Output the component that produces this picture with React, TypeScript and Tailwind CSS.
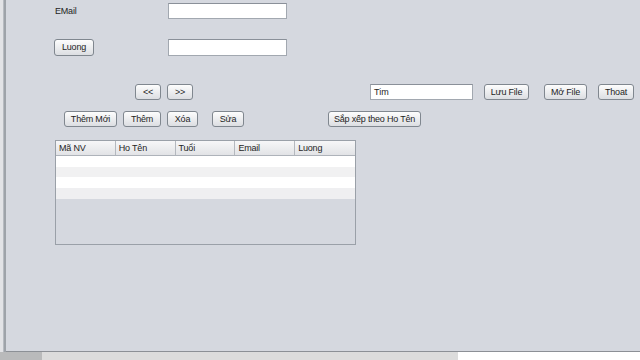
import React from "react";

function Btn({ children, className = "" }: { children: React.ReactNode; className?: string }) {
  return (
    <div
      className={
        "h-[16px] shrink-0 flex items-center justify-center rounded-[3px] border border-[#80878f] bg-gradient-to-b from-[#fdfdfd] to-[#dcdee2] text-[9px] leading-none text-[#1e1e1e] tracking-[-0.2px] " +
        className
      }
    >
      {children}
    </div>
  );
}

function Field({ children, className = "" }: { children?: React.ReactNode; className?: string }) {
  return (
    <div
      className={
        "h-[16px] shrink-0 flex items-center bg-white border border-[#a2a8b0] border-t-[#8a9099] pl-[3px] text-[9px] leading-none text-[#1e1e1e] " +
        className
      }
    >
      {children}
    </div>
  );
}

export default function App() {
  const cols = ["Mã NV", "Ho Tên", "Tuổi", "Email", "Luong"];
  return (
    <div className="w-[640px] h-[360px] overflow-hidden flex flex-col bg-[#d5d8df] font-['Liberation_Sans',Arial,sans-serif]">
      <div className="h-[352px] flex flex-row">
        <div className="w-[6px] shrink-0 flex flex-row">
          <div className="w-[3px] bg-[#e2e3e6]" />
          <div className="w-[1px] bg-[#b7bbc1]" />
          <div className="w-[2px] bg-[#9ea3a9]" />
        </div>
        <div className="flex-1 flex flex-col border-b border-[#8c9096]">
          {/* Row 1 */}
          <div className="mt-[3px] h-[16px] flex flex-row items-center">
            <div className="ml-[49px] w-[113px] text-[9px] leading-none text-[#1e1e1e] tracking-[-0.2px]">EMail</div>
            <Field className="w-[119px]" />
          </div>
          {/* Row 2 */}
          <div className="mt-[20px] h-[17px] flex flex-row items-center">
            <Btn className="ml-[48px] w-[40px] h-[17px]">Luong</Btn>
            <Field className="ml-[74px] w-[119px] h-[17px]" />
          </div>
          {/* Row 3 */}
          <div className="mt-[28px] h-[16px] flex flex-row items-center">
            <Btn className="ml-[129px] w-[26px]">&lt;&lt;</Btn>
            <Btn className="ml-[6px] w-[26px]">&gt;&gt;</Btn>
            <Field className="ml-[177px] w-[103px]">Tim</Field>
            <Btn className="ml-[11px] w-[45px]">Lưu File</Btn>
            <Btn className="ml-[15px] w-[43px]">Mở File</Btn>
            <Btn className="ml-[11px] w-[36px]">Thoat</Btn>
          </div>
          {/* Row 4 */}
          <div className="mt-[11px] h-[16px] flex flex-row items-center">
            <Btn className="ml-[58px] w-[53px]">Thêm Mới</Btn>
            <Btn className="ml-[6px] w-[38px]">Thêm</Btn>
            <Btn className="ml-[6px] w-[31px]">Xóa</Btn>
            <Btn className="ml-[14px] w-[32px]">Sửa</Btn>
            <Btn className="ml-[84px] w-[93px]">Sắp xếp theo Ho Tên</Btn>
          </div>
          {/* Table */}
          <div className="mt-[13px] ml-[49px] w-[301px] h-[105px] border border-[#9aa0a8] flex flex-col">
            <div className="h-[15px] flex flex-row bg-gradient-to-b from-[#f7f7f8] to-[#e2e3e6] border-b border-[#aeb3ba]">
              {cols.map((c, i) => (
                <div
                  key={c}
                  className={
                    "w-[60px] flex items-center pl-[3px] text-[9px] leading-none text-[#1e1e1e] tracking-[-0.2px] " +
                    (i < 4 ? "border-r border-[#b4b8be]" : "")
                  }
                >
                  {c}
                </div>
              ))}
            </div>
            <div className="h-[11px] bg-white" />
            <div className="h-[10px] bg-[#f1f1f2]" />
            <div className="h-[11px] bg-white" />
            <div className="h-[11px] bg-[#efeff1]" />
            <div className="flex-1 bg-[#d5d8df]" />
          </div>
        </div>
      </div>
      <div className="flex-1 flex flex-row">
        <div className="w-[42px] bg-[#b9babb]" />
        <div className="w-[416px] bg-[#dcdcdc]" />
        <div className="flex-1 bg-white" />
      </div>
    </div>
  );
}
